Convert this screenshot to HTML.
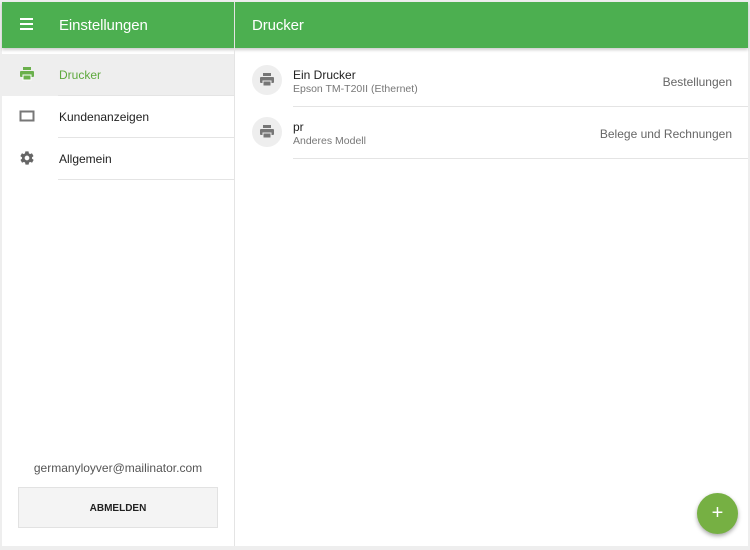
<!DOCTYPE html>
<html><head><style>
*{margin:0;padding:0;box-sizing:border-box}
body{width:750px;height:550px;background:#eeeeee;font-family:"Liberation Sans",sans-serif;position:relative;overflow:hidden}
.hdr{position:absolute;left:2px;top:2px;width:746px;height:46px;background:#4caf50;box-shadow:0 2px 3px rgba(0,0,0,.2);z-index:2}
.hdr .t{position:absolute;color:#fff;font-size:15px;top:15px;letter-spacing:-0.1px}
.side{position:absolute;left:2px;top:48px;width:232px;height:498px;background:#fff}
.main{position:absolute;left:235px;top:48px;width:513px;height:498px;background:#fff}
.vd{position:absolute;left:234px;top:2px;width:1px;height:544px;background:#e4e4e4;z-index:3}
.row{position:absolute;left:0;width:232px;height:42px;font-size:12px;color:#222}
.row .l{position:absolute;left:57px;top:14px}
.row .ic{position:absolute;left:17px;top:13px}
.sep{position:absolute;height:1px;background:#e4e4e4}
.item .n{position:absolute;left:58px;font-size:12px;color:#222}
.item .s{position:absolute;left:58px;font-size:10.5px;color:#777}
.item .r{position:absolute;right:16px;font-size:12px;color:#666}
.av{position:absolute;left:17px;width:30px;height:30px;border-radius:50%;background:#eee}
</style></head><body>
<div class="hdr">
<svg style="position:absolute;left:18px;top:16px" width="14" height="12"><rect y="0" width="13" height="2" fill="#fff"/><rect y="5" width="13" height="2" fill="#fff"/><rect y="10" width="13" height="2" fill="#fff"/></svg>
<div class="t" style="left:57px">Einstellungen</div>
<div class="t" style="left:250px">Drucker</div>
</div>
<div class="vd"></div>
<div class="side">
<div class="row" style="top:6px;background:#eeeeee"><svg class="ic" width="16" height="14" viewBox="0 0 16 14"><rect x="4" y="0" width="8" height="3" fill="#6ab04c"/><rect x="1" y="4" width="14" height="6" rx="1" fill="#6ab04c"/><rect x="4" y="8" width="8" height="5" fill="#6ab04c" stroke="#fff" stroke-width="1"/></svg><span class="l" style="color:#5ea93e">Drucker</span></div>
<div class="sep" style="left:56px;top:47px;width:176px"></div>
<div class="row" style="top:48px"><svg class="ic" width="16" height="14" viewBox="0 0 16 14"><rect x="1.5" y="2.5" width="13" height="9" fill="none" stroke="#777" stroke-width="2"/></svg><span class="l">Kundenanzeigen</span></div>
<div class="sep" style="left:56px;top:89px;width:176px"></div>
<div class="row" style="top:90px"><svg class="ic" width="16" height="16" viewBox="0 0 24 24" style="top:12px"><path fill="#666" d="M19.4 13c0-.3.1-.7.1-1s0-.7-.1-1l2.1-1.6c.2-.2.2-.4.1-.6l-2-3.5c-.1-.2-.4-.3-.6-.2l-2.5 1c-.5-.4-1.1-.7-1.7-1l-.4-2.6c0-.2-.2-.4-.5-.4h-4c-.2 0-.4.2-.5.4l-.4 2.6c-.6.3-1.2.6-1.7 1l-2.5-1c-.2-.1-.5 0-.6.2l-2 3.5c-.1.2-.1.5.1.6L4.6 11c0 .3-.1.7-.1 1s0 .7.1 1l-2.1 1.6c-.2.2-.2.4-.1.6l2 3.5c.1.2.4.3.6.2l2.5-1c.5.4 1.1.7 1.7 1l.4 2.6c0 .2.2.4.5.4h4c.2 0 .4-.2.5-.4l.4-2.6c.6-.3 1.2-.6 1.7-1l2.5 1c.2.1.5 0 .6-.2l2-3.5c.1-.2.1-.5-.1-.6L19.4 13zM12 15.5c-1.9 0-3.5-1.6-3.5-3.5s1.6-3.5 3.5-3.5 3.5 1.6 3.5 3.5-1.6 3.5-3.5 3.5z"/></svg><span class="l">Allgemein</span></div>
<div class="sep" style="left:56px;top:131px;width:176px"></div>
<div style="position:absolute;left:0;width:232px;top:413px;text-align:center;font-size:12px;color:#555">germanyloyver@mailinator.com</div>
<div style="position:absolute;left:16px;top:439px;width:200px;height:41px;background:#f4f4f4;border:1px solid #e2e2e2;text-align:center;line-height:41px;font-size:10px;font-weight:bold;color:#222">ABMELDEN</div>
</div>
<div class="main">
<div class="item"><div class="av" style="top:17px"><svg style="position:absolute;left:7px;top:8px" width="16" height="14" viewBox="0 0 16 14"><rect x="4" y="0" width="8" height="3" fill="#777"/><rect x="1" y="4" width="14" height="6" rx="1" fill="#777"/><rect x="4" y="8" width="8" height="5" fill="#777" stroke="#eee" stroke-width="1"/></svg></div>
<div class="n" style="top:20px">Ein Drucker</div><div class="s" style="top:35px">Epson TM-T20II (Ethernet)</div><div class="r" style="top:27px">Bestellungen</div></div>
<div class="sep" style="left:58px;top:58px;width:455px"></div>
<div class="item"><div class="av" style="top:69px"><svg style="position:absolute;left:7px;top:8px" width="16" height="14" viewBox="0 0 16 14"><rect x="4" y="0" width="8" height="3" fill="#777"/><rect x="1" y="4" width="14" height="6" rx="1" fill="#777"/><rect x="4" y="8" width="8" height="5" fill="#777" stroke="#eee" stroke-width="1"/></svg></div>
<div class="n" style="top:72px">pr</div><div class="s" style="top:87px">Anderes Modell</div><div class="r" style="top:79px">Belege und Rechnungen</div></div>
<div class="sep" style="left:58px;top:110px;width:455px"></div>
<div style="position:absolute;left:462px;top:445px;width:41px;height:41px;border-radius:50%;background:#76b043;box-shadow:0 2px 4px rgba(0,0,0,.35);color:#fff;text-align:center;line-height:40px;font-size:20px">+</div>
</div>
</body></html>
